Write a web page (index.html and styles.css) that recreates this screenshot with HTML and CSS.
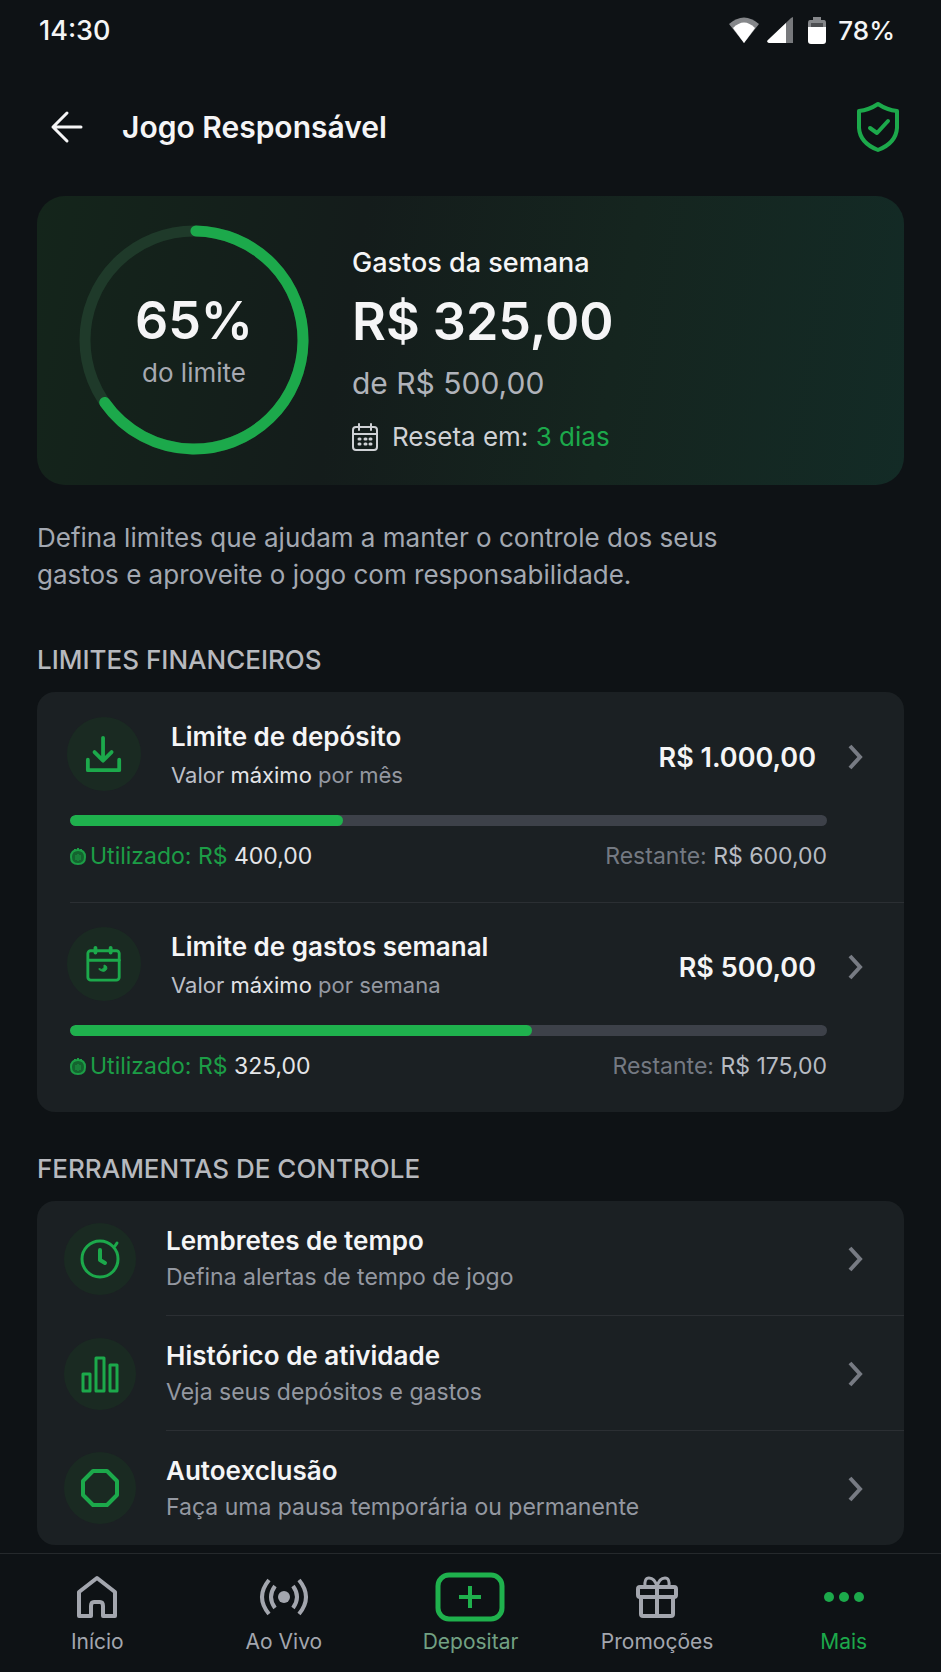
FILE: index.html
```html
<!DOCTYPE html>
<html lang="pt-BR">
<head>
    <meta charset="UTF-8">
    <meta name="viewport" content="width=device-width, initial-scale=1">
    <title>Jogo Responsável</title>
    <link rel="stylesheet" href="styles.css">
</head>
<body>
    <div class="status-bar">
        <span class="status-time">14:30</span>
        <div class="status-icons">
            <svg class="icon-wifi" width="32" height="28" viewBox="0 0 32 28">
                <path d="M16 27 L1 8 Q16 -5 31 8 Z" fill="#85878a"/>
                <path d="M16 27 L5 12 Q16 1 27 12 Z" fill="#ffffff"/>
            </svg>
            <svg class="icon-signal" width="26" height="26" viewBox="0 0 26 26">
                <path d="M26 0 V26 H2 Q-1 25 1 23 L24 1 Z" fill="#77797c"/>
                <path d="M19 6 V26 H2 Q-1 25 1 23 Z" fill="#ffffff"/>
            </svg>
            <svg class="icon-battery" width="18" height="27" viewBox="0 0 18 27">
                <path d="M5 0 H13 V3 H16 Q18 3 18 6 V12 H0 V6 Q0 3 2 3 H5 Z" fill="#85878a"/>
                <path d="M3 6 H15 V10 H3 Z" fill="#4d4f52"/>
                <path d="M0 10 H18 V24 Q18 27 15 27 H3 Q0 27 0 24 Z" fill="#ffffff"/>
            </svg>
            <span>78%</span>
        </div>
    </div>

    <header class="header">
        <button class="back-button" type="button" aria-label="Voltar">
            <svg width="40" height="40" viewBox="0 0 40 40" fill="none" stroke="currentColor" stroke-width="3" stroke-linecap="round" stroke-linejoin="round">
                <path d="M34 20 H6 M20 6 L6 20 L20 34"/>
            </svg>
        </button>
        <h1>Jogo Responsável</h1>
        <svg class="shield" width="44" height="52" viewBox="0 0 44 52" fill="none" stroke="currentColor" stroke-width="4" stroke-linecap="round" stroke-linejoin="round">
            <path d="M22 3 Q31 9 41 10 V27 Q40 42 22 49 Q4 42 3 27 V10 Q13 9 22 3 Z"/>
            <path d="M14 27 L21 32 L32 20"/>
        </svg>
    </header>

    <main class="content">
        <section class="summary">
            <div class="ring">
                <svg viewBox="0 0 230 230" fill="none" stroke-width="11">
                    <circle cx="115" cy="115" r="109" stroke="#1f3a2a"/>
                    <circle cx="115" cy="115" r="109" stroke="#1ca94b" stroke-linecap="round" pathLength="100" stroke-dasharray="65 35" transform="rotate(-89 115 115)"/>
                </svg>
                <div class="ring-label">
                    <strong>65%</strong>
                    <span>do limite</span>
                </div>
            </div>
            <div class="summary-info">
                <h2>Gastos da semana</h2>
                <p class="summary-amount">R$ 325,00</p>
                <p class="summary-total">de R$ 500,00</p>
                <p class="summary-reset">
                    <svg width="26" height="28" viewBox="0 0 26 28" fill="none" stroke="currentColor" stroke-width="2" stroke-linecap="round">
                        <rect x="1" y="4" width="24" height="23" rx="3"/>
                        <path d="M2 11 H24 M7 1 V7 M19 1 V7"/>
                        <path d="M7 16 h1 M13 16 h1 M18 16 h1 M7 21 h1 M13 21 h1 M18 21 h1" stroke-width="3"/>
                    </svg>
                    <span>Reseta em: <em>3 dias</em></span>
                </p>
            </div>
        </section>

        <p class="intro">Defina limites que ajudam a manter o controle dos seus gastos e aproveite o jogo com responsabilidade.</p>

        <h2 class="section-title">LIMITES FINANCEIROS</h2>
        <div class="card">
            <div class="limit">
                <a class="limit-header" href="#deposito">
                    <span class="badge">
                        <svg width="40" height="40" viewBox="0 0 40 40" fill="none" stroke="currentColor" stroke-width="4" stroke-linecap="round" stroke-linejoin="round">
                            <path d="M19 3 V26 M10 18 L19 27 L28 18"/>
                            <path d="M3 26 V37 H36 V26"/>
                        </svg>
                    </span>
                    <span class="limit-text">
                        <strong>Limite de depósito</strong>
                        <span class="limit-note">Valor <b>máximo</b> <i>por mês</i></span>
                    </span>
                    <span class="limit-amount">R$ 1.000,00</span>
                    <svg class="chevron" width="15" height="26" viewBox="0 0 15 26">
                        <path d="M2 2 L12 13 L2 24"/>
                    </svg>
                </a>
                <div class="progress" role="progressbar" aria-label="Limite de depósito utilizado" aria-valuemin="0" aria-valuemax="1000" aria-valuenow="400">
                    <div class="progress-fill" style="width: 36%"></div>
                </div>
                <div class="limit-usage">
                    <span class="used">
                        <svg width="16" height="18" viewBox="0 0 16 18" fill="none" stroke="currentColor" stroke-width="2">
                            <path d="M8 3 Q15 3 15 10 Q15 17 8 17 Q1 17 1 10 Q1 3 8 3 Z" fill="#14632f"/>
                            <path d="M5 2 V4 M8 1 V4 M11 2 V4"/>
                            <path d="M6 8 V13 M8 7 V14 M10 8 V13" stroke-width="1"/>
                        </svg>
                        <span>Utilizado: R$ <b>400,00</b></span>
                    </span>
                    <span class="remaining">Restante: <b>R$ 600,00</b></span>
                </div>
            </div>
            <div class="limit">
                <a class="limit-header" href="#semanal">
                    <span class="badge">
                        <svg width="40" height="40" viewBox="0 0 40 40" fill="none" stroke="currentColor" stroke-width="3" stroke-linecap="round" stroke-linejoin="round">
                            <rect x="3" y="6" width="33" height="31" rx="3"/>
                            <path d="M4 16 H36"/>
                            <path d="M11 3 V8 M27 3 V8" stroke-width="4"/>
                            <path d="M15 25 Q18 27 20 24 L20 21 Q24 22 23 25 Q21 30 15 26 Z" fill="currentColor" stroke-width="1"/>
                        </svg>
                    </span>
                    <span class="limit-text">
                        <strong>Limite de gastos semanal</strong>
                        <span class="limit-note">Valor <b>máximo</b> <i>por semana</i></span>
                    </span>
                    <span class="limit-amount">R$ 500,00</span>
                    <svg class="chevron" width="15" height="26" viewBox="0 0 15 26">
                        <path d="M2 2 L12 13 L2 24"/>
                    </svg>
                </a>
                <div class="progress" role="progressbar" aria-label="Limite semanal utilizado" aria-valuemin="0" aria-valuemax="500" aria-valuenow="325">
                    <div class="progress-fill" style="width: 61%"></div>
                </div>
                <div class="limit-usage">
                    <span class="used">
                        <svg width="16" height="18" viewBox="0 0 16 18" fill="none" stroke="currentColor" stroke-width="2">
                            <path d="M8 3 Q15 3 15 10 Q15 17 8 17 Q1 17 1 10 Q1 3 8 3 Z" fill="#14632f"/>
                            <path d="M5 2 V4 M8 1 V4 M11 2 V4"/>
                            <path d="M6 8 V13 M8 7 V14 M10 8 V13" stroke-width="1"/>
                        </svg>
                        <span>Utilizado: R$ <b>325,00</b></span>
                    </span>
                    <span class="remaining">Restante: <b>R$ 175,00</b></span>
                </div>
            </div>
        </div>

        <h2 class="section-title">FERRAMENTAS DE CONTROLE</h2>
        <div class="card">
            <a class="tool" href="#lembretes">
                <span class="badge">
                    <svg width="40" height="40" viewBox="0 0 40 40" fill="none" stroke="currentColor" stroke-width="3" stroke-linecap="round" stroke-linejoin="round">
                        <circle cx="20" cy="20" r="18"/>
                        <path d="M20 11 V21 L25 24" stroke-width="4"/>
                        <path d="M35 7 L37 4"/>
                    </svg>
                </span>
                <span class="tool-body">
                    <span class="tool-text">
                        <strong>Lembretes de tempo</strong>
                        <span>Defina alertas de tempo de jogo</span>
                    </span>
                    <svg class="chevron" width="15" height="26" viewBox="0 0 15 26">
                        <path d="M2 2 L12 13 L2 24"/>
                    </svg>
                </span>
            </a>
            <a class="tool" href="#historico">
                <span class="badge">
                    <svg width="40" height="40" viewBox="0 0 40 40" fill="none" stroke="currentColor" stroke-width="3" stroke-linejoin="round">
                        <rect x="3" y="20" width="7" height="17"/>
                        <rect x="16" y="4" width="8" height="33"/>
                        <rect x="30" y="11" width="7" height="26"/>
                    </svg>
                </span>
                <span class="tool-body">
                    <span class="tool-text">
                        <strong>Histórico de atividade</strong>
                        <span>Veja seus depósitos e gastos</span>
                    </span>
                    <svg class="chevron" width="15" height="26" viewBox="0 0 15 26">
                        <path d="M2 2 L12 13 L2 24"/>
                    </svg>
                </span>
            </a>
            <a class="tool" href="#autoexclusao">
                <span class="badge">
                    <svg width="40" height="40" viewBox="0 0 40 40" fill="none" stroke="currentColor" stroke-width="4" stroke-linejoin="round">
                        <path d="M13 3 H27 L37 13 V27 L27 37 H13 L3 27 V13 Z"/>
                    </svg>
                </span>
                <span class="tool-body">
                    <span class="tool-text">
                        <strong>Autoexclusão</strong>
                        <span>Faça uma pausa temporária ou permanente</span>
                    </span>
                    <svg class="chevron" width="15" height="26" viewBox="0 0 15 26">
                        <path d="M2 2 L12 13 L2 24"/>
                    </svg>
                </span>
            </a>
        </div>
    </main>

    <nav class="bottom-nav">
        <a href="#inicio">
            <span class="nav-icon">
                <svg width="44" height="44" viewBox="0 0 44 44" fill="none" stroke="currentColor" stroke-width="4" stroke-linejoin="round">
                    <path d="M4 17 L22 3 L40 17 V41 H28 V31 Q28 27 25 27 H19 Q16 27 16 31 V41 H4 Z"/>
                </svg>
            </span>
            Início
        </a>
        <a href="#ao-vivo">
            <span class="nav-icon">
                <svg width="50" height="40" viewBox="0 0 50 40" fill="none" stroke="currentColor" stroke-width="4">
                    <circle cx="25" cy="20" r="6" fill="currentColor" stroke="none"/>
                    <path d="M10 3 Q-4 20 10 37 M40 3 Q54 20 40 37 M16 9 Q8 20 16 31 M34 9 Q42 20 34 31"/>
                </svg>
            </span>
            Ao Vivo
        </a>
        <a class="deposit" href="#depositar">
            <span class="nav-icon">
                <svg width="70" height="50" viewBox="0 0 70 50" fill="none" stroke="#1fb14d" stroke-width="5">
                    <rect x="3" y="3" width="64" height="44" rx="11"/>
                    <path d="M35 14 V36 M24 25 H46" stroke-width="4"/>
                </svg>
            </span>
            Depositar
        </a>
        <a href="#promocoes">
            <span class="nav-icon">
                <svg width="42" height="44" viewBox="0 0 42 44" fill="none" stroke="currentColor" stroke-width="4" stroke-linejoin="round">
                    <rect x="2" y="12" width="38" height="10" rx="2"/>
                    <path d="M5 22 V39 Q5 41 7 41 H35 Q37 41 37 39 V22 M21 12 V41"/>
                    <path d="M21 12 Q19 3 13 3 Q8 3 9 12 M21 12 Q23 3 29 3 Q34 3 33 12" stroke-width="3"/>
                </svg>
            </span>
            Promoções
        </a>
        <a class="active" href="#mais" aria-current="page">
            <span class="nav-icon">
                <svg width="42" height="12" viewBox="0 0 42 12" fill="currentColor">
                    <circle cx="6" cy="6" r="5"/>
                    <circle cx="21" cy="6" r="5"/>
                    <circle cx="36" cy="6" r="5"/>
                </svg>
            </span>
            Mais
        </a>
    </nav>
</body>
</html>
```
FILE: styles.css
```css
/* Base */
* {
    box-sizing: border-box;
}

body {
    background-color: #0e1215;
    color: #f5f5f6;
    font-family: Inter, "Liberation Sans", sans-serif;
    margin: 0;
    min-height: 100vh;
    display: flex;
    flex-direction: column;
}

h1, h2, p {
    margin: 0;
}

a {
    color: inherit;
    text-decoration: none;
}

strong {
    font-weight: 600;
}

b, i, em {
    font-weight: inherit;
    font-style: normal;
}

svg {
    display: block;
    flex-shrink: 0;
}

/* Status bar */
.status-bar {
    display: flex;
    justify-content: space-between;
    align-items: center;
    height: 60px;
    padding: 0 46px 0 39px;
    font-size: 26px;
    font-weight: 500;
}

.status-time {
    font-size: 27px;
}

.status-icons {
    display: flex;
    align-items: center;
}

.icon-signal {
    margin: 0 15px 0 7px;
}

.icon-battery {
    margin-right: 12px;
}

/* Header */
.header {
    display: flex;
    align-items: center;
    gap: 35px;
    padding: 41px 41px 43px 47px;
}

.header h1 {
    flex-grow: 1;
    font-size: 30px;
    font-weight: 600;
}

.back-button {
    background: none;
    border: none;
    color: inherit;
    padding: 0;
    cursor: pointer;
}

.shield {
    color: #1ca94b;
}

.content {
    padding: 0 37px 8px;
}

/* Weekly summary */
.summary {
    display: flex;
    gap: 43px;
    padding: 29px 42px 30px;
    border-radius: 28px;
    background: linear-gradient(100deg, #14251b 0%, #141c1b 36%, #15251f 66%, #132b26 100%);
}

.ring {
    display: grid;
    width: 230px;
    height: 230px;
    flex-shrink: 0;
}

.ring svg, .ring-label {
    grid-area: 1 / 1;
}

.ring-label {
    display: flex;
    flex-direction: column;
    align-items: center;
    justify-content: center;
    padding-top: 2px;
}

.ring-label strong {
    font-size: 52px;
    line-height: 64px;
}

.ring-label span {
    color: #a6a9b1;
    font-size: 26px;
    line-height: 40px;
}

.summary-info {
    padding-top: 20px;
}

.summary-info h2 {
    font-size: 27px;
    font-weight: 500;
    line-height: 36px;
}

.summary-amount {
    font-size: 52px;
    font-weight: 600;
    line-height: 82px;
}

.summary-total {
    color: #b0b3ba;
    font-size: 30px;
    line-height: 40px;
}

.summary-reset {
    display: flex;
    align-items: center;
    gap: 14px;
    margin-top: 16px;
    color: #cfd1d5;
    font-size: 26px;
    line-height: 36px;
}

.summary-reset em {
    color: #1ca94b;
}

.intro {
    max-width: 720px;
    padding: 34px 0 10px;
    color: #a3a8b1;
    font-size: 26px;
    line-height: 37px;
}

.section-title {
    margin: 41px 0 16px;
    color: #b7b9be;
    font-size: 26px;
    font-weight: 500;
    line-height: 32px;
}

.card {
    background-color: #1b2023;
    border-radius: 18px;
    overflow: hidden;
}

.badge {
    display: flex;
    align-items: center;
    justify-content: center;
    width: 74px;
    height: 74px;
    flex-shrink: 0;
    border-radius: 50%;
    background-color: #1a2a22;
    color: #1ca94b;
}

.chevron {
    fill: none;
    stroke: #777b83;
    stroke-width: 4;
}

/* Financial limits */
.limit {
    margin-left: 33px;
    padding: 25px 41px 30px 0;
}

.limit + .limit {
    padding-top: 24px;
    border-top: 1px solid #2b2f33;
}

.limit-header {
    display: flex;
    align-items: center;
    margin-left: -3px;
    height: 80px;
}

.limit-header .badge {
    align-self: flex-start;
}

.limit-header .badge svg {
    width: 38px;
    height: 38px;
}

.limit-text {
    display: flex;
    flex-direction: column;
    flex-grow: 1;
    margin-left: 30px;
    padding-bottom: 2px;
    line-height: 38px;
}

.limit-text strong, .tool-text strong {
    font-size: 26px;
}

.limit-note {
    color: #bbbfc6;
    font-size: 22px;
}

.limit-note b {
    color: #e4e5e8;
}

.limit-note i {
    color: #9498a1;
}

.limit-amount {
    margin-right: 32px;
    font-size: 27px;
    font-weight: 600;
}

.progress {
    height: 11px;
    margin: 18px 36px 14px 0;
    border-radius: 6px;
    background-color: #3d4149;
    overflow: hidden;
}

.progress-fill {
    height: 100%;
    border-radius: 6px;
    background-color: #1fb14d;
}

.limit-usage {
    display: flex;
    justify-content: space-between;
    margin-right: 36px;
    font-size: 23px;
    line-height: 32px;
}

.used {
    display: flex;
    align-items: center;
    gap: 4px;
    color: #1c9d46;
}

.used b {
    color: #e4e5e8;
}

.remaining {
    color: #747982;
}

.remaining b {
    color: #b7bbc2;
}

/* Control tools */
.tool {
    display: flex;
    align-items: center;
    gap: 30px;
    padding-left: 27px;
}

.tool .badge {
    width: 72px;
    height: 72px;
}

.tool-body {
    display: flex;
    align-items: center;
    flex-grow: 1;
    padding: 22px 41px 20px 0;
    border-bottom: 1px solid #2b2f33;
}

.tool:last-child .tool-body {
    border-bottom: none;
}

.tool-text {
    display: flex;
    flex-direction: column;
    flex-grow: 1;
    color: #9498a1;
    font-size: 23px;
    line-height: 36px;
}

.tool-text strong {
    color: #f5f5f6;
}

/* Bottom navigation */
.bottom-nav {
    display: grid;
    grid-template-columns: repeat(5, 1fr);
    margin-top: auto;
    padding: 18px 4px 16px;
    border-top: 1px solid #25292c;
}

.bottom-nav a {
    display: flex;
    flex-direction: column;
    align-items: center;
    gap: 6px;
    color: #a3a6ae;
    font-size: 21px;
    line-height: 28px;
}

.nav-icon {
    display: flex;
    align-items: center;
    height: 50px;
}

.bottom-nav .deposit {
    color: #72a183;
}

.bottom-nav .active {
    color: #1ca94b;
}
```
